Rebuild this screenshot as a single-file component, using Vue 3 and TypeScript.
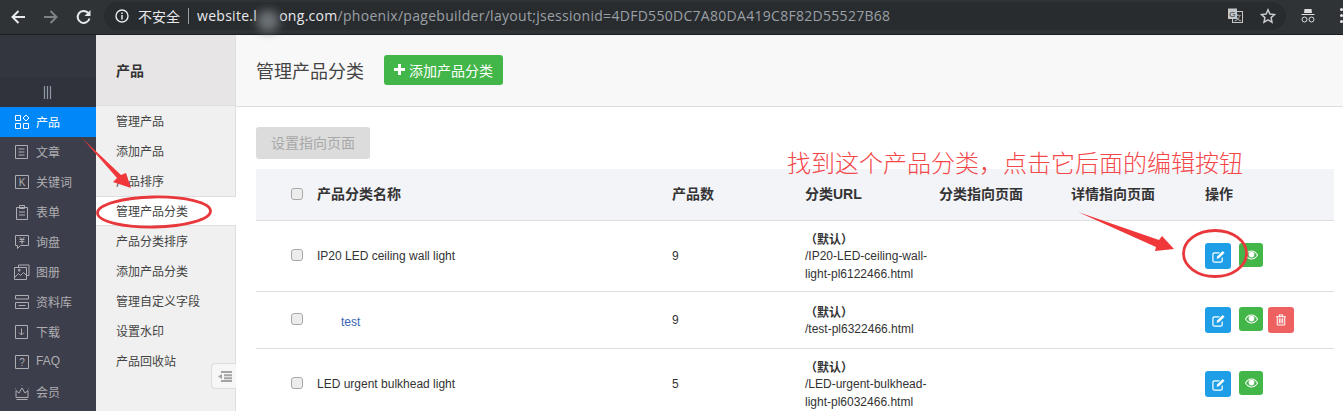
<script setup lang="ts">
interface SideItem { label: string; d: string; glyph?: string; active?: boolean }
interface Row { name: string; child?: boolean; count: number; url: string; canDelete?: boolean }

const sideItems: SideItem[] = [
  { label: '产品', active: true, d: 'M1.5 1.5h5v5h-5z M9 4l3-3 3 3-3 3z M1.5 9.5h5v5h-5z M9.5 9.5h5v5h-5z' },
  { label: '文章', d: 'M1.5 1.5h12v13h-12z M4.5 5h6 M4.5 8h6 M4.5 11h6' },
  { label: '关键词', glyph: 'K', d: 'M1.5 1.5h13v13h-13z' },
  { label: '表单', d: 'M2.5 3.5h11v12h-11z M5.5 1.5h5v3h-5z M5 8h6 M5 11h6' },
  { label: '询盘', d: 'M1.5 1.5h13v10h-8l-3 3v-3h-2z M5.5 3l2.5 2.5 2.5-2.5 M8 5.5v4.5 M5.5 5.5h5 M5.5 7.5h5' },
  { label: '图册', d: 'M4.5 3v-2h10.500v10.500h-2.500 M.5 3.500h12v12h-12z M1 13l3.500-3.500 2 2 3-3 2.500 2.500 M4.500 5.500h1.500v1.500h-1.500z' },
  { label: '资料库', d: 'M1.500 5v-3.500h13v3.500 M1.500 5h13 M1.500 8.500h13v6h-13z M4.500 11.500h7' },
  { label: '下载', d: 'M1.500 1.500h12v13h-12z M7.500 4.500v6 M5 8.500l2.500 2.500 2.500-2.500' },
  { label: 'FAQ', glyph: '?', d: 'M1.500 1.500h13v13h-13z' },
  { label: '会员', d: 'M2 13.500h12 M2.500 15.500h11 M2 6.500l3 2.500 3-5 3 5 3-2.500v7h-12z M8 1.500v.5 M1.500 4v.5 M14.500 4v.5' },
]

const subItems = ['管理产品', '添加产品', '产品排序', '管理产品分类', '产品分类排序', '添加产品分类', '管理自定义字段', '设置水印', '产品回收站']
const activeSub = '管理产品分类'

const columns = ['产品分类名称', '产品数', '分类URL', '分类指向页面', '详情指向页面', '操作']

const rows: Row[] = [
  { name: 'IP20 LED ceiling wall light', count: 9, url: '/IP20-LED-ceiling-wall-light-pl6122466.html' },
  { name: 'test', child: true, count: 9, url: '/test-pl6322466.html', canDelete: true },
  { name: 'LED urgent bulkhead light', count: 5, url: '/LED-urgent-bulkhead-light-pl6032466.html' },
]
</script>

<template>
  <div class="page">
    <header class="chrome">
      <div class="nav-icons">
        <svg width="16" height="16" viewBox="0 0 16 16"><path d="M15 8H2.500M8.500 2L2.500 8l6 6" fill="none" stroke="#e8eaed" stroke-width="2" /></svg>
        <svg width="16" height="16" viewBox="0 0 16 16"><path d="M1 8h12.500M7.500 2l6 6-6 6" fill="none" stroke="#7d8285" stroke-width="2" /></svg>
        <svg width="16" height="16" viewBox="0 0 16 16"><path d="M13.500 9.500A6 6 0 1 1 12 3.700" fill="none" stroke="#e8eaed" stroke-width="2" /><path d="M14.500 1v6h-6z" fill="#e8eaed" /></svg>
      </div>
      <div class="omnibox">
        <svg class="info" width="14" height="14" viewBox="0 0 14 14"><circle cx="7" cy="7" r="6" fill="none" stroke="#e8eaed" stroke-width="1.400" /><path d="M7 6v4.500M7 3.500v1.500" stroke="#e8eaed" stroke-width="1.500" /></svg>
        <span class="insecure">不安全</span>
        <span class="sep"></span>
        <span class="host">website.l</span><span class="smudge"></span><span class="host">ong.com</span><span class="path">/phoenix/pagebuilder/layout;jsessionid=4DFD550DC7A80DA419C8F82D55527B68</span>
        <span class="spring"></span>
        <svg class="translate" width="15" height="15" viewBox="0 0 15 15"><rect x="4.500" y="3.500" width="10" height="11" fill="#2a2d30" stroke="#c4c6c8" /><rect x="0" y="0.500" width="9" height="10.500" fill="#c4c6c8" /><text x="4.500" y="8.500" font-size="8" font-family="Liberation Sans" text-anchor="middle" fill="#2a2d30">G</text><text x="10" y="12" font-size="7" font-family="Noto Sans CJK SC" text-anchor="middle" fill="#c4c6c8">文</text></svg>
        <svg class="star" width="16" height="16" viewBox="0 0 16 16"><path d="M8 1.800l1.900 4.200 4.600.5-3.400 3.100.9 4.600L8 11.900l-4 2.300.9-4.600L1.500 6.500 6.100 6z" fill="none" stroke="#c8cacc" stroke-width="1.500" /></svg>
      </div>
      <svg class="hat" width="16" height="16" viewBox="0 0 16 16"><path d="M4.500 1h7l.5 4h-8z M1.500 6h13v1h-13z" fill="#dcdee0" /><circle cx="4.500" cy="11.500" r="2.500" fill="none" stroke="#dcdee0" /><circle cx="11.500" cy="11.500" r="2.500" fill="none" stroke="#dcdee0" /></svg>
      <div class="dots"><i></i><i></i><i></i></div>
    </header>

    <div class="body">
      <aside class="sidebar">
        <div class="logo"></div>
        <div class="toggle">
          <svg width="10" height="13" viewBox="0 0 10 13"><path d="M1.500 0v13M4.500 0v13M7.500 0v13" stroke="#8f9aa8" stroke-width="1.200" /></svg>
        </div>
        <a v-for="item in sideItems" :key="item.label" class="side-item" :class="{ active: item.active }">
          <svg width="16" height="16" viewBox="0 0 16 16">
            <path :d="item.d" fill="none" stroke="currentColor" />
            <text v-if="item.glyph" x="8" y="12" font-size="10" font-family="Liberation Sans" text-anchor="middle" fill="currentColor">{{ item.glyph }}</text>
          </svg>
          <span class="side-label">{{ item.label }}</span>
        </a>
      </aside>

      <nav class="subnav">
        <div class="subnav-head">产品</div>
        <a v-for="s in subItems" :key="s" class="sub-item" :class="{ current: s === activeSub }">{{ s }}</a>
        <div class="collapse">
          <svg width="15" height="11" viewBox="0 0 15 11"><path d="M4 1h11M7 4.200h8M7 7.200h8M4 10h11" stroke="#a4a4a4" stroke-width="2" /><path d="M5 3v5L1 5.500z" fill="#a4a4a4" /></svg>
        </div>
      </nav>

      <main class="main">
        <div class="main-head">
          <h1>管理产品分类</h1>
          <button class="btn-add">
            <svg width="11" height="11" viewBox="0 0 11 11"><path d="M5.500 0v11M0 5.500h11" stroke="#fff" stroke-width="3" /></svg>
            添加产品分类
          </button>
        </div>
        <div class="content">
          <button class="btn-disabled">设置指向页面</button>
          <div class="table">
            <div class="tr th">
              <div class="cell-check"><span class="check"></span></div>
              <div v-for="c in columns" :key="c" class="th-label">{{ c }}</div>
            </div>
            <div v-for="r in rows" :key="r.name" class="tr">
              <div class="cell-check"><span class="check"></span></div>
              <div><a :class="{ child: r.child }">{{ r.name }}</a></div>
              <div>{{ r.count }}</div>
              <div class="url"><b>（默认）</b><br />{{ r.url }}</div>
              <div></div>
              <div></div>
              <div class="actions">
                <span class="act blue">
                  <svg width="13" height="13" viewBox="0 0 14 14"><path d="M11 8v3.500a1.500 1.500 0 0 1-1.500 1.500h-7A1.500 1.500 0 0 1 1 11.500v-7A1.500 1.500 0 0 1 2.500 3H8" fill="none" stroke="#fff" stroke-width="1.300" /><path d="M11.500 1L13.500 3 7.500 9l-2.500.5.500-2.500z" fill="#fff" /></svg>
                </span>
                <span class="act green">
                  <svg width="13" height="10" viewBox="0 0 16 12"><path d="M.5 6C3 2 5.500 1 8 1s5 1 7.500 5c-2.500 4-5 5-7.500 5S3 10 .5 6z" fill="none" stroke="#fff" stroke-width="1.300" /><circle cx="8" cy="5.500" r="3.500" fill="#fff" /></svg>
                </span>
                <span v-if="r.canDelete" class="act red">
                  <svg width="10" height="12" viewBox="0 0 12 14"><path d="M0 3h12M4 3V1h4v2" fill="none" stroke="#fff" stroke-width="1.300" /><path d="M1.500 3.500v9.500h9V3.500M4 5v6M6 5v6M8 5v6" fill="none" stroke="#fff" stroke-width="1.200" /></svg>
                </span>
              </div>
            </div>
          </div>
        </div>
      </main>
    </div>

    <!-- Hand-drawn red annotations lying over the screenshot -->
    <svg class="marks" width="1343" height="411" viewBox="0 0 1343 411">
      <polygon points="82,138 121,175 126,173 131,188 113,182 117,178" fill="#f0373a" />
      <ellipse cx="154" cy="212" rx="56.500" ry="15" transform="rotate(-1 154 212)" fill="none" stroke="#e8383c" stroke-width="2.800" />
      <polygon points="1078,212 1159,240 1162,236 1174,249 1155,251 1156,247" fill="#f0373a" />
      <ellipse cx="1215" cy="253.500" rx="31.500" ry="23" fill="none" stroke="#e8383c" stroke-width="2.800" />
    </svg>
    <div class="note">找到这个产品分类，点击它后面的编辑按钮</div>
  </div>
</template>

<style>
html, body { margin: 0; padding: 0; overflow: hidden; background: #fff; }
</style>

<style scoped>
* { box-sizing: border-box; }
.page {
  position: relative;
  width: 1343px;
  height: 411px;
  overflow: hidden;
  font-family: "Liberation Sans", "Noto Sans CJK SC", sans-serif;
  font-size: 12px;
  color: #333;
}

/* browser chrome */
.chrome {
  height: 35px;
  background: #2f3336;
  border-bottom: 1px solid #1d1e20;
  display: flex;
  align-items: center;
}
.nav-icons {
  width: 104px;
  flex: none;
  padding-left: 10px;
  display: flex;
  gap: 17px;
}
.omnibox {
  width: 1182px;
  height: 28px;
  margin-top: -3px;
  flex: none;
  border-radius: 14px;
  background: #292c2f;
  display: flex;
  align-items: center;
  padding-left: 11px;
  font-size: 14px;
  letter-spacing: .29px;
  font-family: "Open Sans", "Noto Sans CJK SC", sans-serif;
  white-space: nowrap;
}
.info { flex: none; }
.insecure { color: #e8eaed; margin-left: 9px; letter-spacing: 0; font-family: "Noto Sans CJK SC", sans-serif; }
.sep { width: 1px; height: 16px; background: #9aa0a6; margin: 0 8px 0 8px; }
.host { color: #e8eaed; }
.path { color: #9aa0a6; }
.smudge {
  width: 22px;
  height: 22px;
  flex: none;
  margin-top: 10px;
  border-radius: 50%;
  background: #6d7276;
  filter: blur(5px);
}
.spring { flex: 1; }
.translate { margin-right: 17px; flex: none; }
.star { margin-right: 10px; flex: none; }
.hat { margin-left: 14px; margin-top: -3px; flex: none; }
.dots {
  margin-left: 24px;
  margin-top: -3px;
  display: flex;
  flex-direction: column;
  gap: 3px;
}
.dots i { width: 3px; height: 3px; border-radius: 50%; background: #e8eaed; display: block; }

/* layout */
.body { display: flex; height: 376px; }

/* sidebar */
.sidebar { width: 96px; flex: none; background: #3d3e4b; }
.logo { height: 42px; background: #33363e; }
.toggle {
  height: 30px;
  background: #30323c;
  display: flex;
  align-items: center;
  justify-content: center;
}
.side-item {
  height: 30px;
  display: flex;
  align-items: center;
  padding-left: 14px;
  gap: 6px;
  color: #aeaeb2;
}
.side-label { margin-top: -2px; }
.side-item.active { background: #0088f8; color: #fff; }

/* sub navigation */
.subnav {
  position: relative;
  width: 140px;
  flex: none;
  background: #f0f0f0;
  border-right: 1px solid #dedede;
}
.subnav-head {
  height: 71px;
  background: #e7e5e6;
  border-bottom: 1px solid #dedede;
  display: flex;
  align-items: center;
  padding-left: 20px;
  font-size: 14px;
  font-weight: bold;
}
.sub-item {
  display: flex;
  align-items: center;
  height: 30px;
  padding-left: 20px;
  padding-bottom: 2px;
  color: #444;
}
.sub-item.current {
  background: #fff;
  border-top: 1px solid #dedede;
  border-bottom: 1px solid #dedede;
  margin-right: -1px;
}
.collapse {
  position: absolute;
  left: 115px;
  top: 328px;
  width: 25px;
  height: 26px;
  background: #f6f6f6;
  border: 1px solid #dcdcdc;
  border-right: none;
  border-radius: 4px 0 0 4px;
  display: flex;
  align-items: center;
  justify-content: center;
}

/* main */
.main { flex: 1; min-width: 0; background: #fff; }
.main-head {
  height: 72px;
  background: #f8f8f8;
  border-bottom: 1px solid #dedede;
  display: flex;
  align-items: center;
  padding: 0 20px 2px;
}
.main-head h1 { margin: 0; font-size: 18px; font-weight: normal; color: #444; }
.btn-add {
  margin-left: 20px;
  width: 119px;
  height: 30px;
  border: none;
  border-radius: 3px;
  background: #43b649;
  color: #fff;
  font: inherit;
  font-size: 14px;
  display: flex;
  align-items: center;
  justify-content: center;
  gap: 4px;
  padding: 0;
}
.content { padding: 20px 9px 0 20px; }
.btn-disabled {
  display: block;
  width: 114px;
  height: 32px;
  border: none;
  border-radius: 3px;
  background: #dcdcdc;
  color: #a8a8a8;
  font: inherit;
  font-size: 14px;
  padding: 0 0 2px;
}
.table { margin-top: 10px; }
.tr {
  display: grid;
  grid-template-columns: 61px 355px 133px 134px 132px 134px 1fr;
  align-items: center;
  min-height: 57px;
  padding: 8px 0;
  border-bottom: 1px solid #dedede;
  line-height: 18px;
}
.th {
  min-height: 52px;
  background: #f3f4f8;
  font-size: 14px;
  font-weight: bold;
  color: #333;
}
.th-label { margin-top: -2px; }
.cell-check { padding-left: 35px; display: flex; }
.check {
  width: 12px;
  height: 12px;
  border: 1px solid #a8a8a8;
  border-radius: 3px;
  background: #ececec;
  box-shadow: inset 0 0 1px #fff;
  margin-top: -2px;
}
.child { padding-left: 24px; color: #3a62b5; position: relative; top: 2px; }
.url { padding-right: 6px; word-break: normal; }
.url b { font-weight: bold; font-size: 12px; position: relative; top: 2px; }
.actions { display: flex; align-items: flex-start; }
.act {
  display: flex;
  align-items: center;
  justify-content: center;
  border-radius: 3px;
  height: 26px;
  width: 26px;
}
.blue { background: #1f9ee8; }
.green { background: #43b649; width: 24px; height: 24px; margin-left: 8px; }
.red { background: #ef6060; margin-left: 5px; }

/* annotations */
.marks { position: absolute; left: 0; top: 0; pointer-events: none; }
.note {
  position: absolute;
  left: 787px;
  top: 147px;
  font-size: 24px;
  line-height: 30px;
  color: #f4474a;
  font-weight: 300;
  white-space: nowrap;
  font-family: "Noto Sans CJK SC", sans-serif;
}
</style>
